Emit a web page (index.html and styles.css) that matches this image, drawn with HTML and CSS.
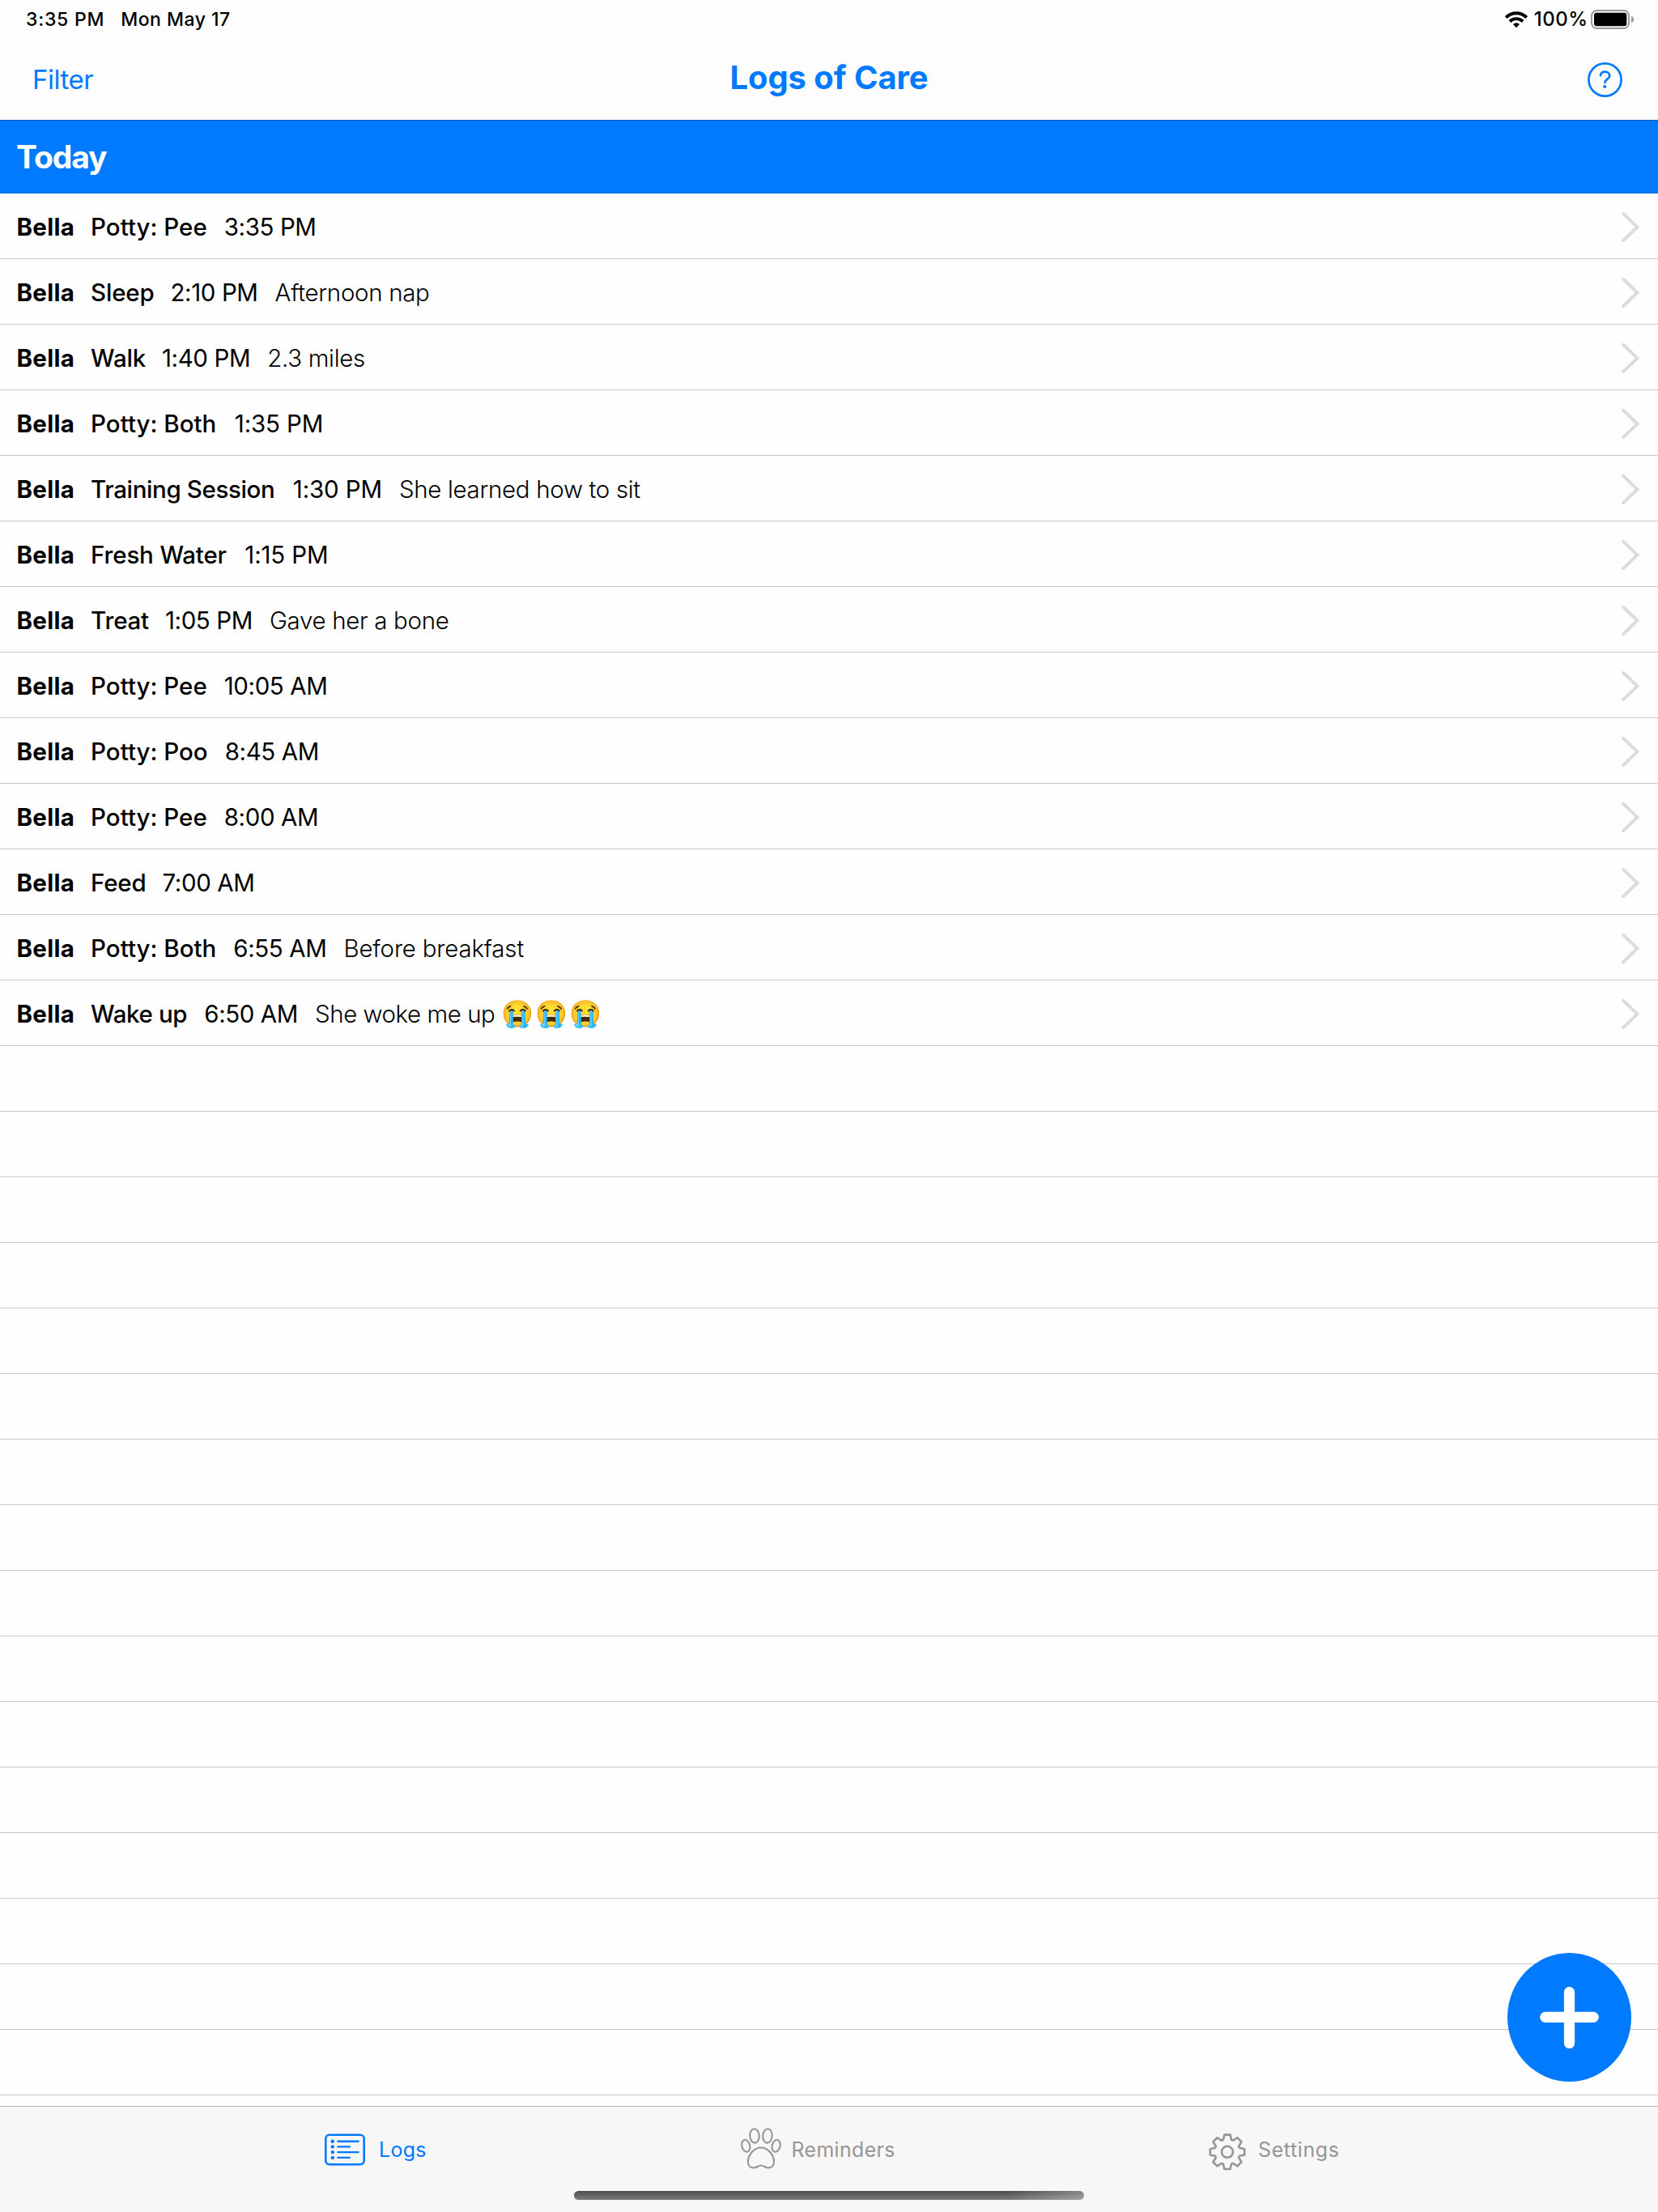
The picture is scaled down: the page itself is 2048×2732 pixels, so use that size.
FILE: index.html
```html
<!DOCTYPE html>
<html lang="en">
<head>
<meta charset="utf-8">
<title>Logs of Care</title>
<link rel="stylesheet" href="styles.css">
</head>
<body>
<svg class="defs" aria-hidden="true">
  <symbol id="chevron" viewBox="0 0 24 40"><path d="M4.2 3.8 21.4 20.4 4.2 37" fill="none" stroke="#dcdcdc" stroke-width="4" stroke-linecap="round" stroke-linejoin="miter"/></symbol>
</svg>
<div class="screen">
  <header class="header">
    <div class="status">
      <span class="clock">3:35 PM</span>
      <span class="date">Mon May 17</span>
      <svg class="wifi" viewBox="1859 13 28 22" aria-label="Wi-Fi">
        <g fill="none" stroke="#000" stroke-width="3.9">
          <path d="M1860.2 21.5a18.2 18.2 0 0 1 25.6 0"/>
          <path d="M1864.9 26.5a11.5 11.5 0 0 1 16.2 0"/>
        </g>
        <path d="M1873 34.2l-4-4.2a5.7 5.7 0 0 1 8 0z"/>
      </svg>
      <span class="percent">100%</span>
      <svg class="battery" viewBox="1965 12 53 24" aria-label="Battery">
        <rect x="1966" y="13" width="46" height="22" rx="6.5" fill="none" stroke="#999" stroke-width="2"/>
        <rect x="1969" y="15.7" width="40.3" height="16.5" rx="3.2"/>
        <path d="M2015 19.8c4 1.6 4 6.8 0 8.4z" fill="#999"/>
      </svg>
    </div>
    <nav class="nav">
      <a class="filter">Filter</a>
      <h1 class="title">Logs of Care</h1>
      <svg class="help" viewBox="0 0 43 43" aria-label="Help">
        <circle cx="21.5" cy="21.5" r="20.1" fill="none" stroke="#007aff" stroke-width="2.7"/>
        <path d="M16 16.2c.3-2.9 2.5-4.5 5.6-4.5 3.2 0 5.6 1.8 5.6 4.8 0 4.4-5.9 4.3-5.9 8.6" fill="none" stroke="#007aff" stroke-width="2.7" stroke-linecap="round"/>
        <circle cx="21.2" cy="30" r="2.1" fill="#007aff"/>
      </svg>
    </nav>
  </header>
  <h2 class="section">Today</h2>
  <ul class="list">
    <li class="row"><b class="pet">Bella</b><span class="kind">Potty: Pee</span><span class="time">3:35 PM</span><svg class="chevron"><use href="#chevron"/></svg></li>
    <li class="row"><b class="pet">Bella</b><span class="kind kind-short">Sleep</span><span class="time">2:10 PM</span><span class="note">Afternoon nap</span><svg class="chevron"><use href="#chevron"/></svg></li>
    <li class="row"><b class="pet">Bella</b><span class="kind kind-short">Walk</span><span class="time">1:40 PM</span><span class="note">2.3 miles</span><svg class="chevron"><use href="#chevron"/></svg></li>
    <li class="row"><b class="pet">Bella</b><span class="kind">Potty: Both</span><span class="time time-wide">1:35 PM</span><svg class="chevron"><use href="#chevron"/></svg></li>
    <li class="row"><b class="pet">Bella</b><span class="kind kind-long">Training Session</span><span class="time time-wide">1:30 PM</span><span class="note">She learned how to sit</span><svg class="chevron"><use href="#chevron"/></svg></li>
    <li class="row"><b class="pet">Bella</b><span class="kind kind-medium">Fresh Water</span><span class="time time-wide">1:15 PM</span><svg class="chevron"><use href="#chevron"/></svg></li>
    <li class="row"><b class="pet">Bella</b><span class="kind kind-short">Treat</span><span class="time">1:05 PM</span><span class="note">Gave her a bone</span><svg class="chevron"><use href="#chevron"/></svg></li>
    <li class="row"><b class="pet">Bella</b><span class="kind">Potty: Pee</span><span class="time">10:05 AM</span><svg class="chevron"><use href="#chevron"/></svg></li>
    <li class="row"><b class="pet">Bella</b><span class="kind">Potty: Poo</span><span class="time">8:45 AM</span><svg class="chevron"><use href="#chevron"/></svg></li>
    <li class="row"><b class="pet">Bella</b><span class="kind">Potty: Pee</span><span class="time">8:00 AM</span><svg class="chevron"><use href="#chevron"/></svg></li>
    <li class="row"><b class="pet">Bella</b><span class="kind kind-short">Feed</span><span class="time">7:00 AM</span><svg class="chevron"><use href="#chevron"/></svg></li>
    <li class="row"><b class="pet">Bella</b><span class="kind">Potty: Both</span><span class="time">6:55 AM</span><span class="note note-wide">Before breakfast</span><svg class="chevron"><use href="#chevron"/></svg></li>
    <li class="row"><b class="pet">Bella</b><span class="kind kind-long">Wake up</span><span class="time">6:50 AM</span><span class="note note-tight">She woke me up <span class="emoji">😭😭😭</span></span><svg class="chevron"><use href="#chevron"/></svg></li>
    <li class="row"></li><li class="row"></li><li class="row"></li><li class="row"></li>
    <li class="row"></li><li class="row"></li><li class="row"></li><li class="row"></li>
    <li class="row"></li><li class="row"></li><li class="row"></li><li class="row"></li>
    <li class="row"></li><li class="row"></li><li class="row"></li><li class="row"></li>
  </ul>
  <nav class="tabs">
    <a class="tab tab-logs active">
      <svg width="50" height="54" viewBox="401 2627.5 50 54">
        <rect x="402.3" y="2636.2" width="47.4" height="36.5" rx="4.6" fill="none" stroke="currentColor" stroke-width="2.6"/>
        <g fill="currentColor"><circle cx="410.8" cy="2644.3" r="2.2"/><circle cx="410.8" cy="2650.9" r="2.2"/><circle cx="410.8" cy="2657.6" r="2.2"/><circle cx="410.8" cy="2664.4" r="2.2"/></g>
        <path d="M417.4 2644.3h25.2M417.4 2650.9h14.4M417.4 2657.6h25.2M417.4 2664.4h14.4" stroke="currentColor" stroke-width="2.4" stroke-linecap="round"/>
      </svg>
      <span>Logs</span>
    </a>
    <a class="tab tab-reminders">
      <svg width="50" height="54" viewBox="915 2627.5 50 54">
        <g fill="none" stroke="currentColor" stroke-width="2.1">
          <ellipse cx="932" cy="2637.4" rx="5.7" ry="8.7" transform="rotate(-4 932 2637.4)"/>
          <ellipse cx="948" cy="2637.4" rx="5.7" ry="8.7" transform="rotate(4 948 2637.4)"/>
          <ellipse cx="921.3" cy="2649.8" rx="4.9" ry="7.6" transform="rotate(-14 921.3 2649.8)"/>
          <ellipse cx="958.7" cy="2649.8" rx="4.9" ry="7.6" transform="rotate(14 958.7 2649.8)"/>
          <path d="M940 2652C948.5 2652 956 2661 956 2669.5C956 2674.5 952.8 2677 949 2677C945.5 2677 943.5 2674 940 2674C936.5 2674 934.5 2677 931 2677C927.2 2677 924 2674.5 924 2669.5C924 2661 931.5 2652 940 2652Z"/>
        </g>
      </svg>
      <span>Reminders</span>
    </a>
    <a class="tab tab-settings">
      <svg width="46" height="54" viewBox="-23 -29.8 46 54">
        <g fill="none" stroke="currentColor" stroke-width="2.6" stroke-linejoin="round">
          <path d="M-5-15-3.6-21.2 3.6-21.2 5-15 7.07-14.14 12.45-17.54 17.54-12.45 14.14-7.07 15-5 21.2-3.6 21.2 3.6 15 5 14.14 7.07 17.54 12.45 12.45 17.54 7.07 14.14 5 15 3.6 21.2-3.6 21.2-5 15-7.07 14.14-12.45 17.54-17.54 12.45-14.14 7.07-15 5-21.2 3.6-21.2-3.6-15-5-14.14-7.07-17.54-12.45-12.45-17.54-7.07-14.14Z"/>
          <circle r="7"/>
        </g>
      </svg>
      <span>Settings</span>
    </a>
  </nav>
  <div class="home-indicator"></div>
  <button class="add" aria-label="Add log">
    <svg width="73" height="76" viewBox="0 0 73 76"><path d="M36.5 6.5v63M6.8 37.4h59.4" stroke="#fff" stroke-width="13.2" stroke-linecap="round"/></svg>
  </button>
</div>
</body>
</html>
```
FILE: styles.css
```css
* { box-sizing: border-box; }

body {
  margin: 0;
  font-family: Inter, "Liberation Sans", sans-serif;
  color: #000;
  background: #fff;
}

.defs { position: absolute; width: 0; height: 0; }

.screen {
  position: relative;
  width: 2048px;
  height: 2732px;
  display: flex;
  flex-direction: column;
  overflow: hidden;
  background: #fefefe;
}

.header {
  height: 149px;
  background: #fdfdfd;
  border-bottom: 1px solid #0055b2;
}

.status {
  display: flex;
  align-items: center;
  height: 47px;
  padding: 0 30px 0 32px;
  font-size: 23px;
  font-weight: 500;
  white-space: nowrap;
}
.clock { letter-spacing: 0.75px; }
.date { margin-left: 20px; letter-spacing: 0.5px; }
.wifi { width: 28px; height: 22px; margin-left: auto; }
.percent { margin-left: 8px; font-size: 24px; letter-spacing: 0.5px; }
.battery { width: 53px; height: 24px; margin-left: 3.5px; }

.nav {
  display: grid;
  grid-template-columns: 1fr auto 1fr;
  align-items: center;
  height: 101px;
  padding: 0 40px;
  color: #007aff;
}
.filter { font-size: 33px; letter-spacing: -0.5px; }
.title {
  margin: 0;
  padding-bottom: 4px;
  font-size: 40px;
  font-weight: 700;
  letter-spacing: -0.1px;
}
.help { justify-self: end; width: 43px; height: 43px; margin: 2px 4px 0 0; }

.section {
  display: flex;
  align-items: center;
  height: 90px;
  margin: 0;
  padding-left: 20px;
  font-size: 39px;
  font-weight: 700;
  letter-spacing: -1.1px;
  color: #fff;
  background: #007aff;
  border-bottom: 1px solid #156bd0;
}

.list {
  flex: 1;
  margin: 0;
  padding: 0;
  list-style: none;
}
.row {
  display: flex;
  align-items: center;
  height: 81px;
  padding: 2px 23px 0 20.5px;
  font-size: 29.5px;
  white-space: nowrap;
  border-bottom: 1px solid #c7c7c9;
}
.pet { font-weight: 700; letter-spacing: 0.28px; }
.kind { margin-left: 20px; font-weight: 500; letter-spacing: 0; }
.kind-short { margin-right: -1px; letter-spacing: -0.2px; }
.kind-medium { letter-spacing: -0.17px; }
.kind-long { letter-spacing: -0.38px; }
.time { margin-left: 21px; letter-spacing: -0.4px; }
.time-wide { margin-left: 22.5px; letter-spacing: -0.15px; }
.note { margin-left: 21px; font-weight: 300; letter-spacing: -0.33px; }
.note-wide { letter-spacing: -0.2px; }
.note-tight { letter-spacing: -0.48px; }
.emoji { font-size: 32px; line-height: 1; letter-spacing: 2px; }
.chevron { width: 24px; height: 40px; margin-left: auto; }

.tabs {
  display: flex;
  height: 131px;
  padding: 0 0 25px 401px;
  color: #969696;
  background: #f7f7f7;
  border-top: 1px solid #b2b2b2;
}
.tab {
  display: flex;
  align-items: center;
  font-size: 25px;
  letter-spacing: 0.3px;
}
.tab svg { flex: none; }
.active { color: #007aff; }
.tab-logs { width: 514px; gap: 17px; }
.tab-reminders { width: 578px; gap: 12.5px; }
.tab-settings { gap: 15px; letter-spacing: 0.6px; }

.home-indicator {
  position: absolute;
  left: 709px;
  top: 2706px;
  width: 630px;
  height: 11px;
  border-radius: 6px;
  background:
    linear-gradient(to right, rgba(255, 255, 255, 0) 85%, rgba(255, 255, 255, 0.3)),
    linear-gradient(#4c4c4c, #7c7c7c);
}

.add {
  position: absolute;
  left: 1862px;
  top: 2412px;
  width: 153px;
  height: 159px;
  display: flex;
  align-items: center;
  justify-content: center;
  padding: 0;
  border: 0;
  border-radius: 50%;
  background: #007aff;
}
```
